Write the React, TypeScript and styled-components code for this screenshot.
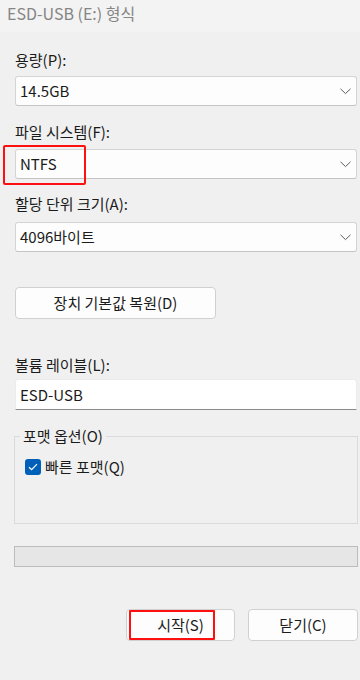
import styled, { createGlobalStyle } from 'styled-components';

const GlobalStyle = createGlobalStyle`
  html, body {
    margin: 0;
    padding: 0;
    background: #f0f0f0;
  }
  * {
    box-sizing: border-box;
  }
`;

function Chevron() {
  return (
    <svg width="11" height="7" viewBox="0 0 11 7">
      <polyline points="0.5,0.8 5.5,5.6 10.5,0.8" fill="none" stroke="#5c5c5c" strokeWidth="1" />
    </svg>
  );
}

function Check() {
  return (
    <svg width="10" height="8" viewBox="0 0 10 8">
      <polyline points="1,4.2 3.6,6.6 9,1.2" fill="none" stroke="#ffffff" strokeWidth="1.2" />
    </svg>
  );
}

export default function App() {
  return (
    <>
      <GlobalStyle />
      <Window>
        <TitleBar>ESD-USB (E:) 형식</TitleBar>
        <Content>
          <Label $top={18}>용량(P):</Label>
          <Select $top={6}>
            <span>14.5GB</span>
            <Chevron />
          </Select>

          <Label $top={16}>파일 시스템(F):</Label>
          <Select $top={7}>
            <span>NTFS</span>
            <Chevron />
            <Highlight />
          </Select>

          <Label $top={15}>할당 단위 크기(A):</Label>
          <Select $top={8}>
            <span>4096바이트</span>
            <Chevron />
          </Select>

          <RestoreButton>장치 기본값 복원(D)</RestoreButton>

          <Label $top={36}>볼륨 레이블(L):</Label>
          <TextInput>ESD-USB</TextInput>

          <Group>
            <Legend>포맷 옵션(O)</Legend>
            <CheckRow>
              <CheckBox>
                <Check />
              </CheckBox>
              빠른 포맷(Q)
            </CheckRow>
          </Group>

          <Progress />

          <ButtonRow>
            <DialogButton $width={109}>
              시작(S)
              <ButtonHighlight />
            </DialogButton>
            <DialogButton $width={110}>닫기(C)</DialogButton>
          </ButtonRow>
        </Content>
      </Window>
    </>
  );
}

const Window = styled.div`
  width: 360px;
  height: 680px;
  background: #f0f0f0;
  font-family: "Noto Sans CJK KR", "Noto Sans", sans-serif;
  font-size: 15px;
  color: #1b1b1b;
  display: flex;
  flex-direction: column;
  overflow: hidden;
`;

const TitleBar = styled.div`
  height: 32px;
  flex-shrink: 0;
  background: #f3f3f3;
  color: #858585;
  padding-left: 7px;
  line-height: 26px;
  font-size: 16px;
`;

const Content = styled.div`
  display: flex;
  flex-direction: column;
  padding: 0 3px 0 15px;
`;

const Label = styled.div<{ $top: number }>`
  margin-top: ${({ $top }) => $top}px;
  line-height: 20px;
  height: 20px;
`;

const Select = styled.div<{ $top: number }>`
  position: relative;
  margin-top: ${({ $top }) => $top}px;
  height: 30px;
  background: #fdfdfd;
  border: 1px solid #d4d4d4;
  border-bottom-color: #c4c4c4;
  border-radius: 3px;
  display: flex;
  align-items: center;
  justify-content: space-between;
  padding: 0 5px 0 4px;
  line-height: 20px;
`;

const Highlight = styled.div`
  position: absolute;
  left: -13px;
  top: -5px;
  width: 83px;
  height: 40px;
  border: 2.5px solid #ff1010;
  border-radius: 2px;
  pointer-events: none;
`;

const RestoreButton = styled.div`
  margin-top: 35px;
  width: 201px;
  height: 32px;
  background: #fdfdfd;
  border: 1px solid #d0d0d0;
  border-radius: 4px;
  display: flex;
  align-items: center;
  justify-content: center;
  line-height: 20px;
`;

const TextInput = styled.div`
  margin-top: 4px;
  height: 31px;
  background: #ffffff;
  border: 1px solid #ececec;
  border-bottom: 1px solid #8a8a8a;
  border-radius: 3px 3px 0 0;
  display: flex;
  align-items: center;
  padding-left: 4px;
  line-height: 20px;
`;

const Group = styled.fieldset`
  margin: 16px -1px 0 -1px;
  height: 98px;
  padding: 0 0 0 5px;
  border: 1px solid #dadada;
  min-width: 0;
`;

const Legend = styled.legend`
  padding: 0 3px;
  margin: 0;
  line-height: 20px;
  font-size: 15px;
`;

const CheckRow = styled.div`
  display: flex;
  align-items: center;
  gap: 4px;
  margin-top: 11px;
  margin-left: 5px;
  line-height: 20px;
`;

const CheckBox = styled.div`
  width: 16px;
  height: 16px;
  border-radius: 3px;
  background: #005fb8;
  display: flex;
  align-items: center;
  justify-content: center;
`;

const Progress = styled.div`
  margin: 22px -1px 0 -1px;
  height: 21px;
  background: #e6e6e6;
  border: 1px solid #bcbcbc;
`;

const ButtonRow = styled.div`
  margin-top: 42px;
  display: flex;
  justify-content: flex-end;
  gap: 13px;
  margin-right: -1px;
`;

const DialogButton = styled.div<{ $width: number }>`
  position: relative;
  width: ${({ $width }) => $width}px;
  height: 32px;
  background: #fdfdfd;
  border: 1px solid #d0d0d0;
  border-radius: 4px;
  display: flex;
  align-items: center;
  justify-content: center;
  line-height: 20px;
`;

const ButtonHighlight = styled.div`
  position: absolute;
  left: 2px;
  top: 0px;
  width: 86px;
  height: 30px;
  border: 2.5px solid #ff1010;
  border-radius: 1px;
  pointer-events: none;
`;
